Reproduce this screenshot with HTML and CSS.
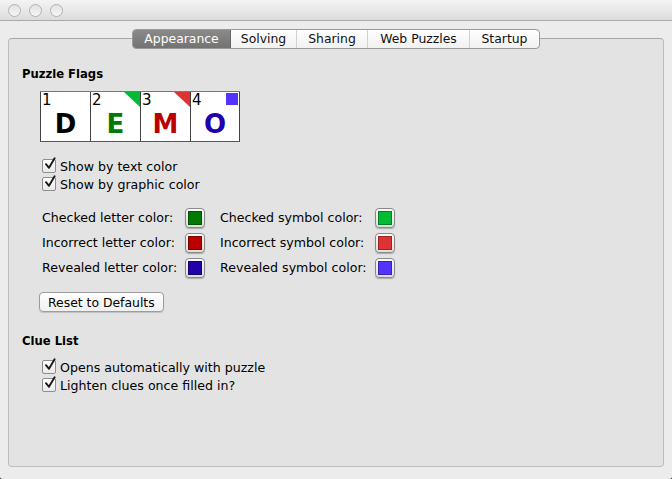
FILE: index.html
```html
<!DOCTYPE html>
<html>
<head>
<meta charset="utf-8">
<link rel="stylesheet" href="styles.css">
</head>
<body>
<div class="window">
  <div class="titlebar">
    <span class="light"></span><span class="light"></span><span class="light"></span>
  </div>
  <div class="content">
    <div class="tabs">
      <div class="tab selected w1">Appearance</div>
      <div class="tab w2">Solving</div>
      <div class="tab w3">Sharing</div>
      <div class="tab w4">Web Puzzles</div>
      <div class="tab last w5">Startup</div>
    </div>
    <div class="box">
      <div class="heading">Puzzle Flags</div>
      <div class="grid">
        <div class="cell"><span class="num">1</span><span class="letter l-d">D</span></div>
        <div class="cell"><span class="num">2</span><span class="tri tri-green"></span><span class="letter l-e">E</span></div>
        <div class="cell"><span class="num">3</span><span class="tri tri-red"></span><span class="letter l-m">M</span></div>
        <div class="cell"><span class="num">4</span><span class="sq"></span><span class="letter l-o">O</span></div>
      </div>
      <div class="checks">
        <label class="check"><span class="cb"><svg viewBox="0 0 14 14" width="14" height="14"><path d="M3 7.2 L6 10.8 L11.6 1.2" fill="none" stroke="#1a1a1a" stroke-width="1.9" stroke-linecap="round" stroke-linejoin="round"/></svg></span>Show by text color</label>
        <label class="check"><span class="cb"><svg viewBox="0 0 14 14" width="14" height="14"><path d="M3 7.2 L6 10.8 L11.6 1.2" fill="none" stroke="#1a1a1a" stroke-width="1.9" stroke-linecap="round" stroke-linejoin="round"/></svg></span>Show by graphic color</label>
      </div>
      <div class="colors">
        <span class="clabel">Checked letter color:</span><span class="well"><span class="swatch" style="background:#007a00"></span></span>
        <span class="clabel">Checked symbol color:</span><span class="well"><span class="swatch" style="background:#00bb33"></span></span>
        <span class="clabel">Incorrect letter color:</span><span class="well"><span class="swatch" style="background:#bb0000"></span></span>
        <span class="clabel">Incorrect symbol color:</span><span class="well"><span class="swatch" style="background:#dd3333"></span></span>
        <span class="clabel">Revealed letter color:</span><span class="well"><span class="swatch" style="background:#2200aa"></span></span>
        <span class="clabel">Revealed symbol color:</span><span class="well"><span class="swatch" style="background:#5533ff"></span></span>
      </div>
      <div class="btnrow"><button class="btn">Reset to Defaults</button></div>
      <div class="heading h2">Clue List</div>
      <div class="checks clue">
        <label class="check"><span class="cb"><svg viewBox="0 0 14 14" width="14" height="14"><path d="M3 7.2 L6 10.8 L11.6 1.2" fill="none" stroke="#1a1a1a" stroke-width="1.9" stroke-linecap="round" stroke-linejoin="round"/></svg></span>Opens automatically with puzzle</label>
        <label class="check"><span class="cb"><svg viewBox="0 0 14 14" width="14" height="14"><path d="M3 7.2 L6 10.8 L11.6 1.2" fill="none" stroke="#1a1a1a" stroke-width="1.9" stroke-linecap="round" stroke-linejoin="round"/></svg></span>Lighten clues once filled in?</label>
      </div>
    </div>
  </div>
</div>
</body>
</html>
```

FILE: styles.css
```css
html, body {
  margin: 0;
  padding: 0;
  background: #000;
}
body {
  font-family: "DejaVu Sans", "Liberation Sans", sans-serif;
  font-size: 12px;
  color: #000;
}
.window {
  width: 672px;
  height: 479px;
  background: #ececec;
  display: flex;
  flex-direction: column;
  overflow: hidden;
  border-radius: 0 0 2px 2px;
}
.titlebar {
  height: 21px;
  flex: none;
  box-sizing: border-box;
  border-bottom: 1px solid #a9a9a9;
  background: linear-gradient(#f4f4f4, #dcdcdc);
  display: flex;
  align-items: center;
  gap: 8px;
  padding-left: 8px;
}
.light {
  width: 11px;
  height: 11px;
  border-radius: 50%;
  border: 1px solid #b2b2b2;
  background: linear-gradient(#e2e2e2, #f6f6f6);
}
.content {
  flex: 1;
  padding: 8px 8px 12px 8px;
  display: flex;
  flex-direction: column;
  position: relative;
}
.tabs {
  position: absolute;
  top: 8px;
  left: 132px;
  display: flex;
  height: 20px;
  box-sizing: border-box;
  border: 1px solid #9a9a9a;
  border-radius: 4px;
  background: linear-gradient(#ffffff, #f1f1f1);
  overflow: hidden;
  z-index: 2;
}
.tab {
  box-sizing: border-box;
  text-align: center;
  line-height: 18px;
  font-size: 12.4px;
  border-right: 1px solid #d0d0d0;
  color: #111;
}
.w1 { width: 98px; }
.w2 { width: 66px; }
.w3 { width: 71px; }
.w4 { width: 102px; }
.w5 { width: 69px; }
.tab.last { border-right: none; }
.tab.selected {
  background: linear-gradient(#8a8a8a, #737373);
  color: #fff;
  border-right: 1px solid #666;
}
.box {
  margin-top: 9px;
  flex: 1;
  border: 1px solid #bdbdbd;
  border-top-color: #a7a7a7;
  border-radius: 4px;
  background: #e3e3e3;
  padding: 27px 13px 0 13px;
}
.heading {
  font-weight: bold;
  font-size: 11.6px;
  height: 16px;
  line-height: 16px;
}
.h2 { margin-top: 21px; }
.grid {
  display: flex;
  margin: 9px 0 0 18px;
  width: 200px;
  border-top: 1px solid #777;
  border-bottom: 1px solid #555;
}
.cell {
  width: 49px;
  height: 49px;
  background: #fff;
  border-left: 1px solid #444;
  position: relative;
}
.cell:last-child { border-right: 1px solid #444; width: 48px; }
.num {
  position: absolute;
  left: 1px;
  top: 0px;
  font-size: 15px;
  line-height: 16px;
}
.letter {
  position: absolute;
  left: 0;
  right: 0;
  top: 17px;
  text-align: center;
  font-size: 26px;
  line-height: 30px;
  font-weight: bold;
}
.l-d { color: #000; }
.l-e { color: #007a00; }
.l-m { color: #bb0000; }
.l-o { color: #2200aa; }
.tri {
  position: absolute;
  right: 0;
  top: 0;
  width: 0;
  height: 0;
  border-style: solid;
  border-width: 0 16px 15px 0;
}
.tri-green { border-color: transparent #00bb33 transparent transparent; }
.tri-red { border-color: transparent #dd3333 transparent transparent; }
.sq {
  position: absolute;
  right: 1px;
  top: 1px;
  width: 12px;
  height: 12px;
  background: #5533ff;
}
.checks {
  margin: 15px 0 0 20px;
  display: flex;
  flex-direction: column;
}
.checks.clue { margin-top: 9px; }
.check {
  display: flex;
  align-items: center;
  height: 18px;
  font-size: 12.6px;
}
.cb {
  width: 12px;
  height: 12px;
  border: 1px solid #8e8e8e;
  border-radius: 2px;
  background: linear-gradient(#ffffff, #e9e9e9);
  margin-right: 4px;
  position: relative;
  flex: none;
}
.cb svg {
  position: absolute;
  left: 0;
  top: -3px;
}
.colors {
  margin: 12px 0 0 20px;
  display: grid;
  grid-template-columns: 143px 35px 155px 20px;
  grid-auto-rows: 25px;
  align-items: center;
}
.clabel {
  font-size: 12.6px;
  white-space: nowrap;
}
.well {
  width: 20px;
  height: 20px;
  box-sizing: border-box;
  border-radius: 4px;
  background: linear-gradient(#fafafa, #dedede);
  border: 1px solid #8a8a8a;
  box-shadow: 0 1px 1px rgba(0,0,0,0.25);
  display: flex;
  align-items: center;
  justify-content: center;
}
.swatch {
  width: 14px;
  height: 14px;
  border: 1px solid rgba(0,0,0,0.3);
  box-sizing: border-box;
}
.btnrow {
  margin: 12px 0 0 17px;
}
.btn {
  font-family: "DejaVu Sans", "Liberation Sans", sans-serif;
  font-size: 12.4px;
  height: 20px;
  padding: 0 8px;
  border: 1px solid #9c9c9c;
  border-radius: 4px;
  background: linear-gradient(#ffffff, #f0f0f0);
  box-shadow: 0 1px 1px rgba(0,0,0,0.15);
  color: #000;
}
```
